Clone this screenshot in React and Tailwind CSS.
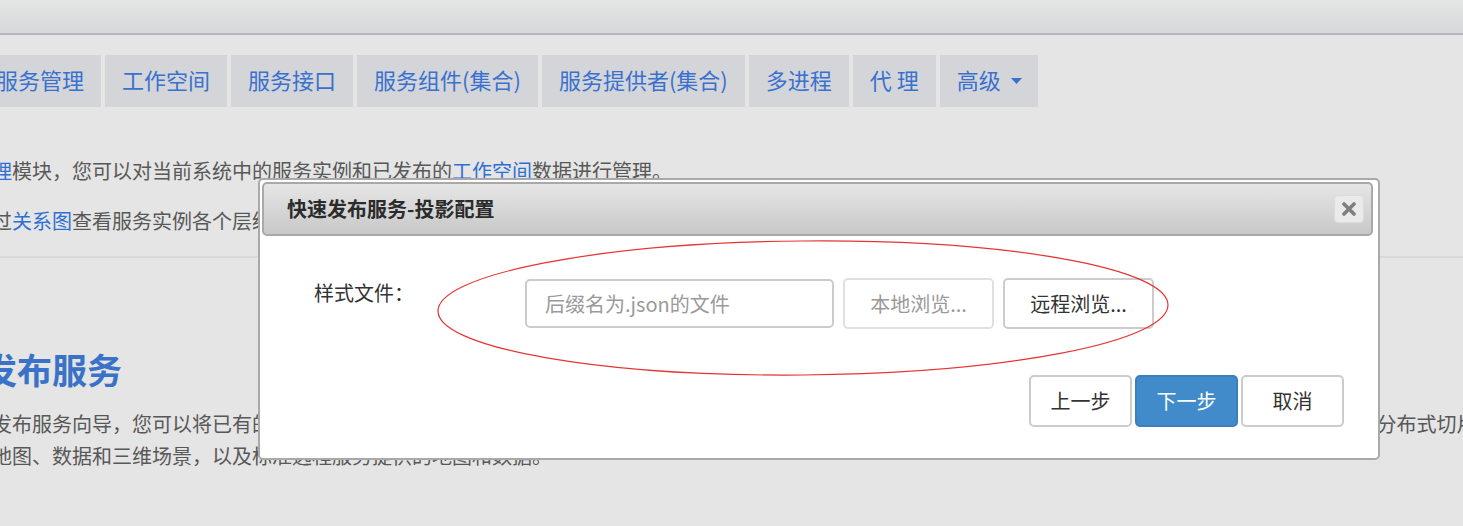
import React from "react";

const tabs = ["服务管理", "工作空间", "服务接口", "服务组件(集合)", "服务提供者(集合)", "多进程", "代 理"];

export default function App() {
  return (
    <div
      className="relative w-[1463px] h-[526px] overflow-hidden bg-[#e5e5e5]"
      style={{ fontFamily: '"Noto Sans CJK SC", "Noto Sans", sans-serif' }}
    >
      {/* top bar */}
      <div className="h-[35px] bg-gradient-to-b from-[#e4e5e5] to-[#d7d8da] border-b-2 border-[#b6b7c2]" />

      {/* nav tabs */}
      <div className="mt-[20px] ml-[-21px] flex gap-[4px]">
        {tabs.map((t) => (
          <div
            key={t}
            className="h-[52px] px-[17px] pb-[4px] flex items-center bg-[#d3d5d9] text-[22px] leading-none text-[#3a71cf] whitespace-nowrap"
          >
            {t}
          </div>
        ))}
        <div className="h-[52px] pl-[17px] pr-[16px] pb-[4px] flex items-center gap-[10px] bg-[#d3d5d9] text-[22px] leading-none text-[#3a71cf]">
          <span>高级</span>
          <svg width="11" height="6" viewBox="0 0 11 6" className="mt-[4px]">
            <path d="M0 0 L11 0 L5.5 6 Z" fill="#3a71cf" />
          </svg>
        </div>
      </div>

      {/* page content */}
      <div className="ml-[-8px] text-[20px] text-[#585858]">
        <p className="mt-[49px] leading-[30px] whitespace-nowrap">
          <span className="text-[#2f6fd4]">理</span>模块，您可以对当前系统中的服务实例和已发布的
          <span className="text-[#2f6fd4]">工作空间</span>数据进行管理。
        </p>
        <p className="mt-[20px] leading-[30px] whitespace-nowrap">
          过<span className="text-[#2f6fd4]">关系图</span>查看服务实例各个层级之间的依赖关系。
        </p>
        <div className="mt-[20px] ml-[8px] border-t-2 border-[#d9d9d9]" />
        <h2 className="mt-[86px] ml-[-10px] text-[35px] leading-[50px] font-bold text-[#3a72c8]">发布服务</h2>
        <p className="mt-[14px] leading-[32px] whitespace-nowrap">
          发布服务向导，您可以将已有的工作空间中的地图、数据和三维场景发布为多种类型的服务，同时还支持将本地或远程存储的瓦片数据和数据库中的缓存 作为分布式切片服务发布。
          <br />
          地图、数据和三维场景，以及标准远程服务提供的地图和数据。
        </p>
      </div>

      {/* modal */}
      <div className="absolute left-[258px] top-[178px] w-[1122px] h-[282px] bg-white border-2 border-[#a9a9a9] rounded-[5px] p-[2px] flex flex-col">
        <div className="h-[54px] mr-[3px] flex items-center justify-between pl-[23px] pr-[7px] rounded-[5px] border-2 border-[#a9a9a9] bg-gradient-to-b from-[#e6e6e6] to-[#c8c8c8]">
          <span className="text-[20px] font-bold text-[#2b2b2b] leading-none">快速发布服务-投影配置</span>
          <div className="w-[30px] h-[28px] flex items-center justify-center rounded-[4px] bg-[#eaeaea] border border-[#dcdcdc]">
            <svg width="14" height="14" viewBox="0 0 14 14">
              <path d="M2 2 L12 12 M12 2 L2 12" stroke="#7f7f7f" strokeWidth="3.6" strokeLinecap="round" />
            </svg>
          </div>
        </div>

        <div className="mt-[42px] flex items-start">
          <label className="w-[263px] pl-[52px] text-[20px] leading-[30px] text-[#333] shrink-0">样式文件：</label>
          <div className="flex items-center gap-[9px]">
            <div className="w-[309px] h-[49px] border-2 border-[#cccccc] rounded-[5px] flex items-center pl-[18px] text-[20px] text-[#9a9a9a]">
              后缀名为.json的文件
            </div>
            <button className="w-[151px] h-[51px] border-2 border-[#e0e0e0] rounded-[5px] bg-white text-[20px] text-[#9a9a9a]">
              本地浏览...
            </button>
            <button className="w-[151px] h-[51px] border-2 border-[#cccccc] rounded-[5px] bg-white text-[20px] text-[#333]">
              远程浏览...
            </button>
          </div>
        </div>

        <div className="mt-[46px] flex justify-end gap-[3px] pr-[32px]">
          <button className="w-[103px] h-[52px] border-2 border-[#cccccc] rounded-[5px] bg-white text-[20px] text-[#333]">上一步</button>
          <button className="w-[103px] h-[52px] border-2 border-[#3a7fc0] rounded-[5px] bg-[#428bca] text-[20px] text-white">下一步</button>
          <button className="w-[103px] h-[52px] border-2 border-[#cccccc] rounded-[5px] bg-white text-[20px] text-[#333]">取消</button>
        </div>
      </div>

      {/* red annotation ellipse */}
      <svg className="absolute left-0 top-0 pointer-events-none" width="1463" height="526">
        <ellipse cx="803" cy="308" rx="365" ry="67" fill="none" stroke="#e53535" strokeWidth="1.2" transform="rotate(-0.5 803 308)" />
      </svg>
    </div>
  );
}
